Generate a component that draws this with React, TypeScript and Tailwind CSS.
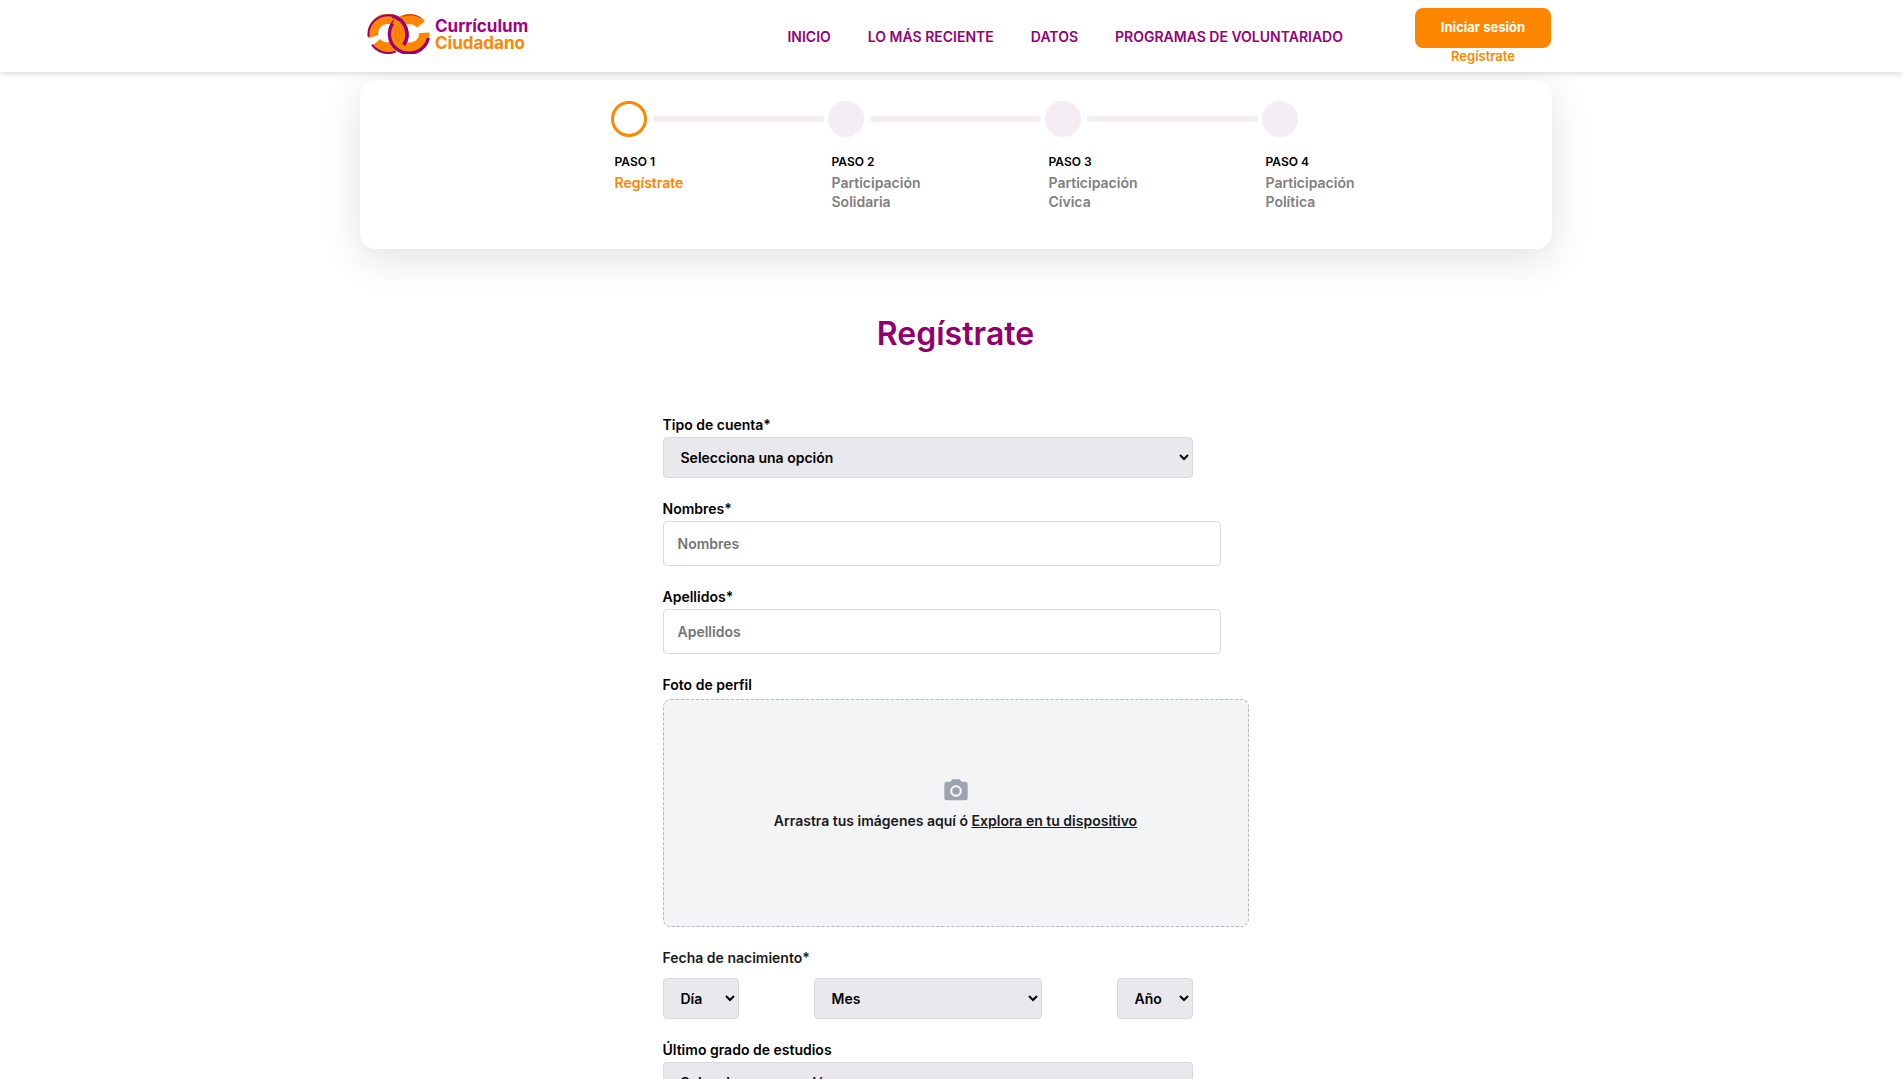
import { useState } from 'react';
import { MdPhotoCamera } from 'react-icons/md';

const navLinks = ['Inicio', 'Lo más reciente', 'Datos', 'Programas de voluntariado'];

const steps = [
  { title: 'Paso 1', label: 'Regístrate' },
  { title: 'Paso 2', label: 'Participación Solidaria' },
  { title: 'Paso 3', label: 'Participación Cívica' },
  { title: 'Paso 4', label: 'Participación Política' },
];

const months = [
  'Enero', 'Febrero', 'Marzo', 'Abril', 'Mayo', 'Junio',
  'Julio', 'Agosto', 'Septiembre', 'Octubre', 'Noviembre', 'Diciembre',
];

const selectClass = 'h-[41px] rounded border border-[#d9d9dd] bg-[#e9e9ed] pl-[13px] text-sm font-semibold text-black';
const inputClass =
  'h-[45px] w-full rounded border border-[#dcdcdc] bg-white px-3.5 text-sm font-semibold text-black placeholder:text-[#757575]';

function Logo() {
  return (
    <a href="#" className="flex items-start gap-1" aria-label="Currículum Ciudadano">
      <svg viewBox="12 12 192 120" className="h-10 w-16" fill="none">
        {/* left ring */}
        <path d="M31 80 A45 43 0 1 1 40 97" stroke="#ff8600" strokeWidth="31" />
        <path d="M17 80 A59 57 0 0 1 76 16 A59 57 0 0 1 110 26" stroke="#960078" strokeWidth="6" />
        <path d="M27 104 A59 57 0 0 0 98 125" stroke="#960078" strokeWidth="6" />
        {/* right ring */}
        <path d="M174 43 A45 43 0 1 0 184 68" stroke="#ff8600" strokeWidth="31" />
        <path d="M104 26 A59 57 0 1 0 196 84" stroke="#960078" strokeWidth="10" />
        <path d="M120 19 A59 57 0 0 1 174 24" stroke="#960078" strokeWidth="2" />
        {/* the left ring passes over the right one at the top */}
        <path d="M92 33 A44 43 0 0 1 118 74" stroke="#ff8600" strokeWidth="16" />
        <path d="M88 18 A59 57 0 0 1 122 105" stroke="#960078" strokeWidth="11" />
        <path d="M102 48 C95 62 95 82 104 96" stroke="#d9702a" strokeWidth="3" />
        <path d="M104 48 C112 62 112 82 104 96" stroke="#d9702a" strokeWidth="2" />
      </svg>
      <span className="flex flex-col pt-1 text-[17px] leading-[17px] font-bold">
        <span className="text-[#a3007e]">Currículum</span>
        <span className="text-[#ff8600]">Ciudadano</span>
      </span>
    </a>
  );
}

function Header() {
  return (
    <header className="relative h-[72px] bg-white pl-[7px] shadow-[0_2px_6px_rgba(0,0,0,0.14)]">
      <div className="mx-auto flex h-full max-w-[1192px] items-start justify-between pl-2">
        <div className="pt-3.5">
          <Logo />
        </div>
        <div className="flex items-start gap-[72px]">
          <nav className="flex gap-[37px] pt-[27px]">
            {navLinks.map((link) => (
              <a key={link} href="#" className="text-sm font-semibold uppercase text-[#960078]">
                {link}
              </a>
            ))}
          </nav>
          <div className="flex flex-col items-center pt-2">
            <button type="button" className="h-10 w-[136px] rounded-lg bg-[#ff8600] text-[13px] font-bold text-white">
              Iniciar sesión
            </button>
            <a href="#" className="text-[13px] leading-4 font-semibold text-[#ff8600]">
              Regístrate
            </a>
          </div>
        </div>
      </div>
    </header>
  );
}

function Stepper({ current }: { current: number }) {
  return (
    <section className="mx-auto mt-2 max-w-[1192px] rounded-2xl bg-white pt-[21px] pb-[38px] pl-[251px] shadow-[0_10px_40px_rgba(0,0,0,0.12)]">
      <ol className="grid max-w-[868px] grid-cols-4">
        {steps.map((step, index) => (
          <li key={step.title}>
            <div className="flex items-center gap-1.5">
              <span
                className={
                  index === current
                    ? 'size-9 shrink-0 rounded-full border-3 border-[#ff8600] bg-white'
                    : 'size-9 shrink-0 rounded-full bg-[#f4edf4]'
                }
              />
              {index < steps.length - 1 && <span className="mr-1 h-1.5 grow rounded-full bg-[#f4edf4]" />}
            </div>
            <div className="mt-[15px] pl-1 font-semibold">
              <p className="text-xs leading-5 uppercase text-black">{step.title}</p>
              <p
                className={
                  index === current
                    ? 'mt-px w-24 text-sm leading-[19px] text-[#ff8600]'
                    : 'mt-px w-24 text-sm leading-[19px] text-[#808080]'
                }
              >
                {step.label}
              </p>
            </div>
          </li>
        ))}
      </ol>
    </section>
  );
}

export default function App() {
  const [firstName, setFirstName] = useState('');
  const [lastName, setLastName] = useState('');

  return (
    <div className="min-h-screen bg-white font-['Inter',sans-serif] text-black">
      <Header />

      <main className="pb-6 pl-2">
        <Stepper current={0} />

        <h1 className="mt-[65px] text-center text-[32px] leading-10 font-semibold text-[#91006f]">Regístrate</h1>

        <form className="mx-auto mt-[61px] flex max-w-[586px] flex-col gap-[21px] text-sm font-semibold">
          <div className="flex flex-col gap-0.5 pr-14">
            <label htmlFor="account-type">Tipo de cuenta*</label>
            <select id="account-type" className={selectClass}>
              <option>Selecciona una opción</option>
              <option>Ciudadano</option>
              <option>Organización</option>
            </select>
          </div>

          <div className="flex flex-col gap-0.5 pr-7">
            <label htmlFor="first-name">Nombres*</label>
            <input
              id="first-name"
              type="text"
              placeholder="Nombres"
              value={firstName}
              onChange={(e) => setFirstName(e.target.value)}
              className={inputClass}
            />
          </div>

          <div className="flex flex-col gap-0.5 pr-7">
            <label htmlFor="last-name">Apellidos*</label>
            <input
              id="last-name"
              type="text"
              placeholder="Apellidos"
              value={lastName}
              onChange={(e) => setLastName(e.target.value)}
              className={inputClass}
            />
          </div>

          <div className="flex flex-col gap-1">
            <span>Foto de perfil</span>
            <div className="flex h-[228px] flex-col items-center justify-center gap-1.5 rounded-lg border border-dashed border-[#b4b8be] bg-[#f3f4f6] pb-[18px] text-[#1a1a1a]">
              <MdPhotoCamera className="size-7 text-[#9ca3af]" />
              <p>
                Arrastra tus imágenes aquí ó{' '}
                <a href="#" className="underline">
                  Explora en tu dispositivo
                </a>
              </p>
            </div>
          </div>

          <fieldset className="pr-14">
            <legend className="mb-2.5 text-[#1a1a1a]">Fecha de nacimiento*</legend>
            <div className="flex justify-between">
              <select aria-label="Día" className={`${selectClass} w-[76px]`}>
                <option>Día</option>
                {Array.from({ length: 31 }, (_, i) => (
                  <option key={i}>{i + 1}</option>
                ))}
              </select>
              <select aria-label="Mes" className={`${selectClass} w-[228px]`}>
                <option>Mes</option>
                {months.map((month) => (
                  <option key={month}>{month}</option>
                ))}
              </select>
              <select aria-label="Año" className={`${selectClass} w-[76px]`}>
                <option>Año</option>
                {Array.from({ length: 80 }, (_, i) => (
                  <option key={i}>{2005 - i}</option>
                ))}
              </select>
            </div>
          </fieldset>

          <div className="flex flex-col gap-0.5 pr-14">
            <label htmlFor="studies">Último grado de estudios</label>
            <select id="studies" className={selectClass}>
              <option>Selecciona una opción</option>
              <option>Primaria</option>
              <option>Secundaria</option>
              <option>Licenciatura</option>
            </select>
          </div>
        </form>
      </main>
    </div>
  );
}
